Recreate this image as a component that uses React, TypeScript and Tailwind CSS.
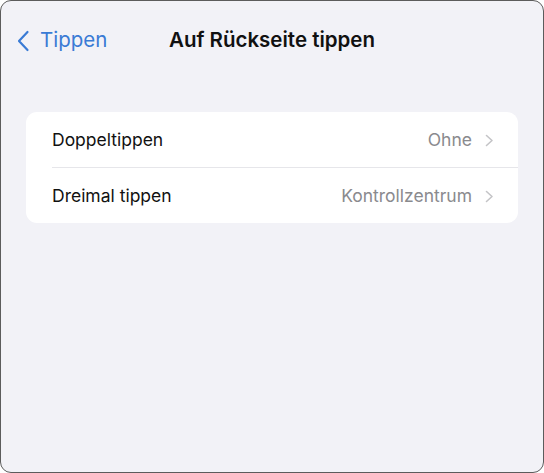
import React from "react";

const rows = [
  { label: "Doppeltippen", value: "Ohne" },
  { label: "Dreimal tippen", value: "Kontrollzentrum" },
];

const Chevron: React.FC<{ className?: string }> = ({ className }) => (
  <svg viewBox="0 0 9 13" className={className} fill="none">
    <path
      d="M1.5 1.5L7 6.5L1.5 11.5"
      stroke="currentColor"
      strokeWidth="1.6"
      strokeLinecap="round"
      strokeLinejoin="round"
    />
  </svg>
);

const App: React.FC = () => {
  return (
    <div
      className="w-[544px] h-[473px] bg-white"
      style={{ fontFamily: "Inter, 'Noto Sans', sans-serif" }}
    >
      <div className="h-full rounded-[11px] border-[1.5px] border-[#5c5c5c] bg-[#f2f2f7] overflow-hidden">
        <div className="grid grid-cols-[1fr_auto_1fr] items-center h-[79px]">
          <div className="flex items-center pl-[15px] text-[#3a7bd5]">
            <svg viewBox="0 0 14 22" className="w-[14px] h-[22px]" fill="none">
              <path
                d="M11.5 2L3 11L11.5 20"
                stroke="currentColor"
                strokeWidth="2.2"
                strokeLinecap="round"
                strokeLinejoin="round"
              />
            </svg>
            <span className="ml-[10px] text-[20.5px]">Tippen</span>
          </div>
          <h1 className="text-[20.5px] font-semibold text-[#111]">
            Auf Rückseite tippen
          </h1>
          <div />
        </div>

        <div className="mx-[25px] mt-[32px] bg-white rounded-[11px]">
          {rows.map((row, i) => (
            <div key={row.label} className="flex">
              <div
                className={
                  "flex flex-1 items-center ml-[26px] pr-[24px] pt-[2px] " +
                  (i > 0 ? "h-[56px] border-t border-[#e6e6ea]" : "h-[55px]")
                }
              >
                <span className="text-[17.5px] text-[#111]">{row.label}</span>
                <span className="ml-auto text-[17.5px] text-[#8a8a8e]">
                  {row.value}
                </span>
                <Chevron className="ml-[13px] w-[9px] h-[13px] text-[#c4c4c7]" />
              </div>
            </div>
          ))}
        </div>
      </div>
    </div>
  );
};

export default App;
